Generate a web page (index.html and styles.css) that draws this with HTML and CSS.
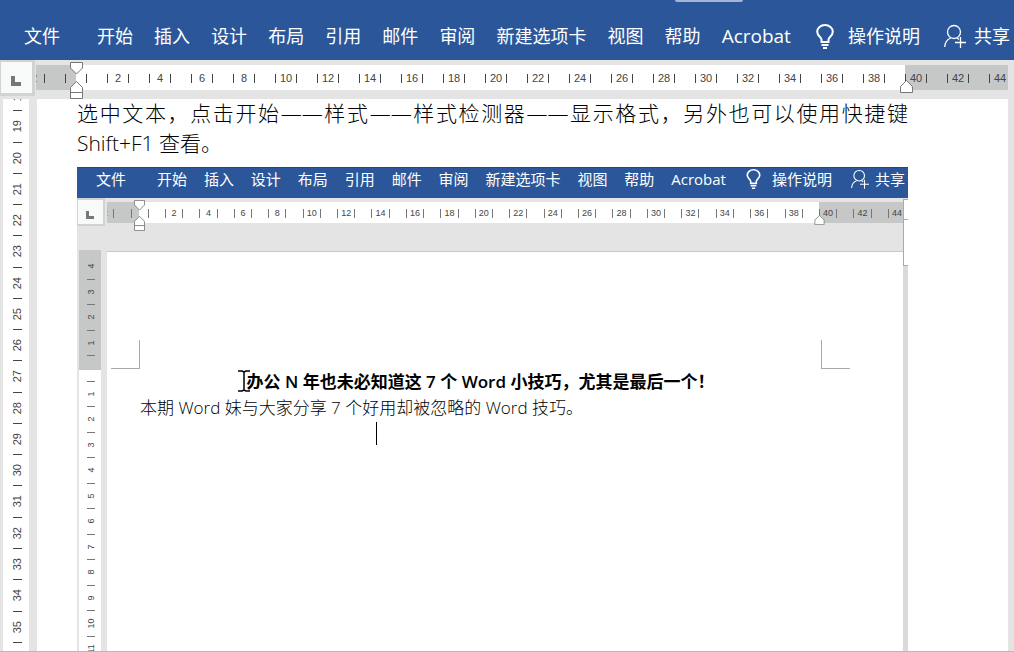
FILE: index.html
```html
<!DOCTYPE html>
<html lang="zh-CN">
<head>
    <meta charset="UTF-8"/>
    <title>Word</title>
    <link rel="stylesheet" href="styles.css">
</head>
<body>
<header class="ribbon">
    <button class="file">文件</button>
    <nav class="tabs">
        <button>开始</button>
        <button>插入</button>
        <button>设计</button>
        <button>布局</button>
        <button>引用</button>
        <button>邮件</button>
        <button>审阅</button>
        <button>新建选项卡</button>
        <button>视图</button>
        <button>帮助</button>
        <button class="latin">Acrobat</button>
    </nav>
    <button class="tell">
        <svg class="bulb" viewBox="0 0 18 25"><path d="M5.500 18v-2.500C5.500 13 1.200 12 1.200 7.800a7.800 6.800 0 0 1 15.600 0C16.800 12 12.500 13 12.500 15.500V18zM5.500 21h7M7 24h4"/></svg>
        <span>操作说明</span>
    </button>
    <button class="share">
        <svg class="person" viewBox="0 0 22 24"><circle cx="10" cy="8" r="6.500"/><path d="M.7 23c.3-5 2.300-7.500 6-9M13 14l2 1.500M16.500 13v11M11 18.500h11"/></svg>
        <span>共享</span>
    </button>
</header>
<div class="ruler-bar">
    <button class="tab-stop" aria-label="制表符"><i></i></button>
    <div class="ruler">
        <ol>
            <li><b>2</b></li><li><b></b></li>
            <li><b>2</b></li><li><b>4</b></li><li><b>6</b></li><li><b>8</b></li><li><b>10</b></li>
            <li><b>12</b></li><li><b>14</b></li><li><b>16</b></li><li><b>18</b></li><li><b>20</b></li>
            <li><b>22</b></li><li><b>24</b></li><li><b>26</b></li><li><b>28</b></li><li><b>30</b></li>
            <li><b>32</b></li><li><b>34</b></li><li><b>36</b></li><li><b>38</b></li><li><b>40</b></li>
            <li><b>42</b></li><li><b>44</b></li>
        </ol>
    </div>
    <svg class="indent" viewBox="0 0 13 37"><path d="M.5.5h12V6l-6 6-6-6zM6.500 19.500l6 6v11H.5v-11zM.5 30.500h12"/></svg>
    <svg class="indent-right" viewBox="0 0 13 13"><path d="M6.500.5l6 6v6H.5v-6z"/></svg>
</div>
<main class="workspace">
    <ol class="vruler">
        <li><b>18</b></li><li><b>19</b></li><li><b>20</b></li><li><b>21</b></li><li><b>22</b></li>
        <li><b>23</b></li><li><b>24</b></li><li><b>25</b></li><li><b>26</b></li><li><b>27</b></li>
        <li><b>28</b></li><li><b>29</b></li><li><b>30</b></li><li><b>31</b></li><li><b>32</b></li>
        <li><b>33</b></li><li><b>34</b></li><li><b>35</b></li><li><b></b></li>
    </ol>
    <article class="page">
        <p class="tip">选中文本，点击开始——样式——样式检测器——显示格式，另外也可以使用快捷键 Shift+F1 查看。</p>
        <section class="shot">
            <div class="ribbon">
                <button class="file">文件</button>
                <div class="tabs">
                    <button>开始</button>
                    <button>插入</button>
                    <button>设计</button>
                    <button>布局</button>
                    <button>引用</button>
                    <button>邮件</button>
                    <button>审阅</button>
                    <button>新建选项卡</button>
                    <button>视图</button>
                    <button>帮助</button>
                    <button class="latin">Acrobat</button>
                </div>
                <button class="tell">
                    <svg class="bulb" viewBox="0 0 18 25"><path d="M5.500 18v-2.500C5.500 13 1.200 12 1.200 7.800a7.800 6.800 0 0 1 15.600 0C16.800 12 12.500 13 12.500 15.500V18zM5.500 21h7M7 24h4"/></svg>
                    <span>操作说明</span>
                </button>
                <button class="share">
                    <svg class="person" viewBox="0 0 22 24"><circle cx="10" cy="8" r="6.500"/><path d="M.7 23c.3-5 2.300-7.500 6-9M13 14l2 1.500M16.500 13v11M11 18.500h11"/></svg>
                    <span>共享</span>
                </button>
            </div>
            <div class="ruler-bar">
                <button class="tab-stop" aria-label="制表符"><i></i></button>
                <div class="ruler">
                    <ol>
                        <li><b>2</b></li><li><b></b></li>
                        <li><b>2</b></li><li><b>4</b></li><li><b>6</b></li><li><b>8</b></li><li><b>10</b></li>
                        <li><b>12</b></li><li><b>14</b></li><li><b>16</b></li><li><b>18</b></li><li><b>20</b></li>
                        <li><b>22</b></li><li><b>24</b></li><li><b>26</b></li><li><b>28</b></li><li><b>30</b></li>
                        <li><b>32</b></li><li><b>34</b></li><li><b>36</b></li><li><b>38</b></li><li><b>40</b></li>
                        <li><b>42</b></li><li><b>44</b></li>
                    </ol>
                </div>
                <svg class="indent" viewBox="0 0 13 37"><path d="M.5.5h12V6l-6 6-6-6zM6.500 19.500l6 6v11H.5v-11zM.5 30.500h12"/></svg>
                <svg class="indent-right" viewBox="0 0 13 13"><path d="M6.500.5l6 6v6H.5v-6z"/></svg>
                <div class="scroll-thumb"></div>
            </div>
            <div class="workspace">
                <ol class="vruler">
                    <li><b>4</b></li><li><b>3</b></li><li><b>2</b></li><li><b>1</b></li>
                    <li><b></b></li>
                    <li><b>1</b></li><li><b>2</b></li><li><b>3</b></li><li><b>4</b></li>
                    <li><b>5</b></li><li><b>6</b></li><li><b>7</b></li><li><b>8</b></li>
                    <li><b>9</b></li><li><b>10</b></li><li><b>11</b></li>
                </ol>
                <div class="sheet">
                    <div class="crops"><i class="crop-left"></i><i class="crop-right"></i></div>
                    <h1>办公 N 年也未必知道这 7 个 Word 小技巧，尤其是最后一个！</h1>
                    <p>本期 Word 妹与大家分享 7 个好用却被忽略的 Word 技巧。</p>
                    <svg class="pointer" viewBox="0 0 12 22"><path d="M0 1h4l2 1 2-1h4M6 2v18M0 21h4l2-1 2 1h4"/></svg>
                    <i class="caret"></i>
                </div>
            </div>
        </section>
    </article>
</main>
</body>
</html>
```
FILE: styles.css
```css
* {box-sizing:border-box;}
body {background:#e4e4e4;border-bottom:1px solid #b8b8b8;color:#000;display:flex;flex-direction:column;font-family:"Open Sans","Noto Sans CJK SC",sans-serif;margin:0;min-height:100vh;}
ol {list-style:none;margin:0;padding:0;}
button {background:none;border:0;color:inherit;font:inherit;margin:0;padding:0;white-space:nowrap;}
svg {display:block;fill:none;stroke:currentColor;}

/* ribbon */
.ribbon {align-items:center;background:#2b579a;color:#fff;display:flex;font-size:18px;height:60px;line-height:26px;padding:12px 4px 0 24px;position:relative;}
.ribbon::before {background:#a3b5d4;border-radius:0 0 2px 2px;content:"";height:2px;left:675px;position:absolute;top:0;width:68px;}
.tabs {align-items:center;display:flex;flex:1;justify-content:space-between;margin:0 25px 0 37px;}
.latin {font-size:19px;}
.tell, .share {align-items:center;display:flex;}
.tell {gap:14px;margin-right:24px;}
.share {gap:8px;}
.bulb {height:25px;stroke-width:2;width:18px;}
.person {height:24px;stroke-width:1.3;width:22px;}

/* horizontal ruler */
.ruler-bar {display:flex;height:39px;padding-right:6px;position:relative;}
.tab-stop {align-items:flex-start;background:#f8faf9;border:2px solid #d1d3d2;border-width:2px 3px 3px 1px;display:flex;height:36px;margin-right:1px;padding:14px 0 0 10px;width:35px;}
.tab-stop i {border:solid #777;border-width:0 0 4px 4px;display:block;height:10px;width:10px;}
.ruler {background:linear-gradient(90deg,#c6c8c7 40px,#fff 40px,#fff calc(100% - 103px),#c6c8c7 calc(100% - 103px));color:#444;flex:1;font:11px/9px "Liberation Sans",sans-serif;height:25px;margin-top:5px;overflow:hidden;}
.ruler ol {display:flex;margin:9px -13px 0 -23px;}
.ruler li {flex:1;}
.ruler b {border:solid;border-width:0 1px;display:block;font-weight:inherit;height:9px;margin:0 auto;text-align:center;width:calc(50% + 1px);}
.indent, .indent-right {fill:#fff;position:absolute;stroke:#777;}
.indent {height:37px;left:70px;top:2px;width:13px;}
.indent-right {height:13px;right:101px;top:20px;width:13px;}

/* vertical ruler and page */
.workspace {display:flex;flex:1;padding:0 6px 0 3px;}
.vruler {background:#fff;color:#444;display:flex;flex-direction:column;font:11px/13px "Liberation Sans",sans-serif;margin-right:8px;overflow:hidden;padding-left:2px;width:26px;}
.vruler li {align-items:center;display:flex;flex:1;flex-direction:column;}
.vruler li::after {background:#444;content:"";height:1px;width:9px;}
.vruler b {flex:1;font-weight:inherit;text-align:center;transform:rotate(180deg);writing-mode:vertical-rl;}
.page > .tip {font-size:21px;font-weight:300;line-height:30px;margin:-1px 0 9px;text-align:justify;}
.page {background:#fff;display:flex;flex:1;flex-direction:column;padding:0 100px 0 40px;}
.page, .vruler {min-width:0;}
.vruler::before {content:"";margin-top:-19px;}
.vruler::after {content:"";margin-bottom:-23px;}

/* picture inside the document */
.shot {background:#e4e4e4;display:flex;flex:1;flex-direction:column;}
.shot .ribbon {border-top:1px solid #24477c;font-size:15px;height:31px;line-height:20px;padding:0 3px 8px 19px;}
.shot .ribbon::before {display:none;}
.shot .tabs {margin:0 20px 0 31px;}
.shot .latin {font-size:15px;}
.shot .tell {gap:11px;margin-right:19px;}
.shot .share {gap:6px;}
.shot .bulb {height:20px;width:15px;}
.shot .person {height:20px;width:18px;}
.shot .ruler-bar {height:52px;padding-right:5px;}
.shot .tab-stop {border-width:2px 2px 2px 1px;height:28px;margin-right:2px;padding:11px 0 0 8px;width:28px;}
.shot .tab-stop i {border-width:0 0 3px 3px;height:8px;width:8px;}
.shot .ruler {background:linear-gradient(90deg,#c6c8c7 32px,#fff 32px,#fff calc(100% - 84px),#c6c8c7 calc(100% - 84px));font-size:9px;height:21px;margin-top:4px;}
.shot .ruler ol {margin:7px -11px 0 -19px;}
.shot .ruler b {border-color:#777;}
.shot .indent {height:31px;left:57px;width:11px;}
.shot .indent-right {height:10px;right:83px;top:17px;width:11px;}
.scroll-thumb {background:linear-gradient(#aaa,#aaa) 0 19px/100% 1px no-repeat #fff;border:solid #aaa;border-width:1px 0 1px 1px;height:67px;position:absolute;right:0;top:1px;width:5px;}
.shot .workspace {background:linear-gradient(#dadada,#dadada) right/5px 100% no-repeat;padding:0 5px 0 2px;}
.shot .vruler {background:linear-gradient(#c6c8c7 120px,#fff 120px);font-size:9px;line-height:11px;margin-right:6px;padding-top:4px;width:22px;}
.shot .vruler::before {margin-top:0;}
.shot .vruler::after {margin-bottom:-11px;}
.shot .vruler li::after {background:#777;width:8px;}
.sheet {background:#fff;border-top:1px solid #c8c8c8;flex:1;font-size:17px;line-height:26px;margin-top:1px;padding:88px 82px 0 33px;position:relative;}
.crops {display:flex;height:29px;justify-content:space-between;margin:0 -29px;}
.crops i {border:0 solid #aaa;width:29px;}
.crops .crop-left {border-width:0 1px 1px 0;}
.crops .crop-right {border-width:0 0 1px 1px;}
.sheet h1 {font-size:17px;font-weight:600;margin:0;text-align:center;}
.sheet p {font-weight:300;margin:0;}
.pointer {height:22px;left:131px;position:absolute;stroke:#000;stroke-width:1.5;top:118px;width:12px;}
.caret {background:#000;height:23px;left:269px;position:absolute;top:170px;width:1px;}
```
